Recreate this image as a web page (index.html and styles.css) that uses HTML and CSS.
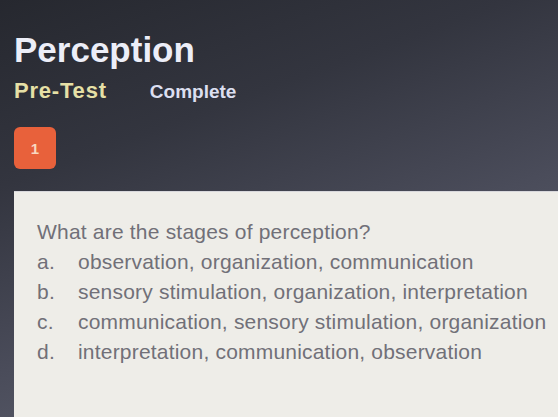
FILE: index.html
```html
<!DOCTYPE html>
<html>
<head>
<meta charset="utf-8">
<link rel="stylesheet" href="styles.css">
</head>
<body>
<div class="page">
  <h1 class="title">Perception</h1>
  <div class="tabs">
    <span class="tab tab-active">Pre-Test</span>
    <span class="tab tab-status">Complete</span>
  </div>
  <div class="badge">1</div>
  <div class="panel">
    <p class="question">What are the stages of perception?</p>
    <ol class="options">
      <li class="option"><span class="letter">a.</span><span class="answer">observation, organization, communication</span></li>
      <li class="option"><span class="letter">b.</span><span class="answer">sensory stimulation, organization, interpretation</span></li>
      <li class="option"><span class="letter">c.</span><span class="answer">communication, sensory stimulation, organization</span></li>
      <li class="option"><span class="letter">d.</span><span class="answer">interpretation, communication, observation</span></li>
    </ol>
  </div>
</div>
</body>
</html>
```
FILE: styles.css
```css
html, body {
  margin: 0;
  padding: 0;
  height: 100%;
  overflow: hidden;
}
body {
  font-family: "Liberation Sans", Arial, sans-serif;
  background: linear-gradient(160deg, #26282f 0%, #33353f 30%, #4a4c5a 60%, #666a78 100%);
}
.page {
  display: flex;
  flex-direction: column;
  align-items: flex-start;
  padding: 30px 0 0 14px;
  min-height: 100%;
  box-sizing: border-box;
}
.title {
  margin: 0;
  font-size: 35px;
  line-height: 40px;
  font-weight: bold;
  color: #eceef8;
}
.tabs {
  display: flex;
  align-items: baseline;
  gap: 43px;
  margin-top: 8px;
  line-height: 26px;
  font-weight: bold;
}
.tab-active {
  font-size: 22px;
  letter-spacing: 0.8px;
  color: #e6e0a6;
}
.tab-status {
  font-size: 19px;
  color: #dcdff0;
}
.badge {
  margin-top: 22px;
  width: 42px;
  height: 42px;
  border-radius: 6px;
  background: #e8613b;
  color: #f8d8c0;
  font-size: 15px;
  font-weight: bold;
  display: flex;
  align-items: center;
  justify-content: center;
}
.panel {
  margin-top: 22px;
  align-self: stretch;
  flex: 1;
  background: #eeede8;
  border-top: 1px solid #d8d8dc;
  padding: 26px 0 0 23px;
  color: #717078;
  font-size: 21px;
  letter-spacing: 0.2px;
}
.question {
  margin: 0;
  line-height: 28px;
}
.options {
  list-style: none;
  margin: 1px 0 0;
  padding: 0;
}
.option {
  display: flex;
  line-height: 30px;
  white-space: nowrap;
}
.letter {
  width: 41px;
  flex: none;
}
```
